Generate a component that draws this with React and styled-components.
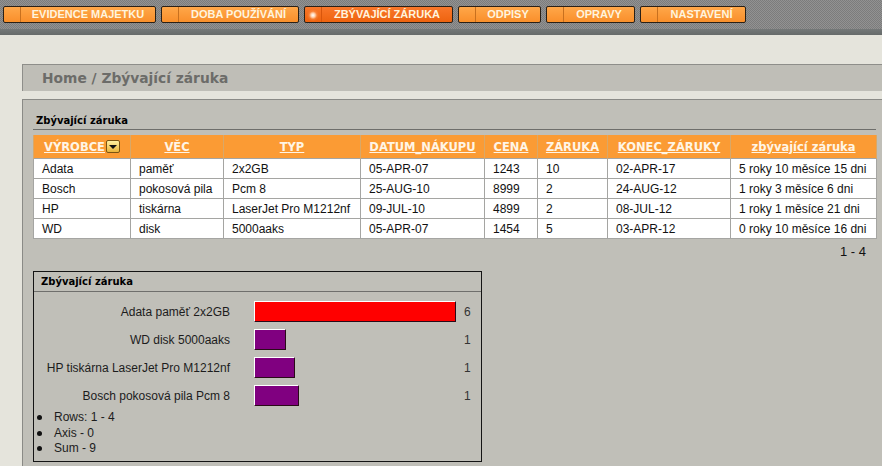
import React from 'react';
import styled, { createGlobalStyle, css } from 'styled-components';

const GlobalStyle = createGlobalStyle`
  html, body {
    margin: 0;
    padding: 0;
  }
  body {
    background: #e5e4dc;
    font-family: 'Liberation Sans', Arial, sans-serif;
    color: #111;
  }
`;

const NavBar = styled.nav`
  height: 35px;
  box-sizing: border-box;
  display: flex;
  align-items: flex-start;
  gap: 5px;
  padding: 6px 0 0 3px;
  background:
    linear-gradient(to bottom, transparent 29px, #747878 29px, #666a6a 35px),
    repeating-conic-gradient(#929292 0 25%, #7c7c7c 0 50%) 0 0 / 2px 2px;
`;

const NavButton = styled.a`
  display: flex;
  box-sizing: border-box;
  height: 17px;
  width: ${(p) => p.$w}px;
  border: 1px solid #2a2016;
  border-radius: 2px;
  background: linear-gradient(#ffa749, #f98f2b);
  color: #fff4de;
  font: bold 11px 'Liberation Sans', Arial, sans-serif;
  text-decoration: none;
  cursor: pointer;
  ${(p) =>
    p.$active &&
    css`
      background: linear-gradient(#f9772a, #ee630f);
    `}
`;

const NavCap = styled.span`
  width: 16px;
  flex: none;
  border-right: 1px solid #c8701e;
  ${(p) =>
    p.$active &&
    css`
      border-right-color: #d8560c;
      background: radial-gradient(circle at 50% 55%, #fff 0, #ffd2b0 2px, rgba(255, 150, 80, 0.4) 4px, transparent 6px);
    `}
`;

const NavLabel = styled.span`
  flex: 1;
  display: flex;
  align-items: center;
  justify-content: center;
  line-height: 15px;
`;

const Content = styled.main`
  padding: 29px 0 0 22px;
`;

const Breadcrumb = styled.div`
  height: 27px;
  box-sizing: border-box;
  display: flex;
  align-items: center;
  padding-left: 19px;
  background: #bfbeb7;
  border-top: 1px solid #8e8e8a;
  border-left: 1px solid #8e8e8a;
  color: #6c6c69;
  font: bold 13.8px 'DejaVu Sans', Verdana, sans-serif;
`;

const Panel = styled.section`
  margin-top: 8px;
  background: #c0bfb8;
  border-top: 1px solid #8a8a86;
  border-left: 1px solid #8a8a86;
  padding: 0 6px 4px 10px;
`;

const PanelTitle = styled.h2`
  margin: 0;
  height: 30px;
  box-sizing: border-box;
  display: flex;
  align-items: flex-end;
  padding: 0 0 3px 3px;
  border-bottom: 1px solid #6e6e6b;
  font: bold 10px 'DejaVu Sans', Verdana, sans-serif;
  color: #000;
`;

const Table = styled.table`
  margin-top: 5px;
  width: 843px;
  border-collapse: collapse;
  table-layout: fixed;
`;

const Th = styled.th`
  height: 23px;
  padding: 0;
  background: #fb9b34;
  border-left: 1px solid #d9a868;
  border-right: 1px solid #d9a868;
  color: #fff5e6;
  font: bold 11.5px 'DejaVu Sans', Verdana, sans-serif;
  text-align: center;
  vertical-align: middle;
`;

const HeadLink = styled.a`
  color: inherit;
  text-decoration: underline;
  cursor: pointer;
`;

const SortIcon = styled.span`
  display: inline-block;
  vertical-align: middle;
  margin-left: 1px;
  position: relative;
  top: -1px;
  width: 12px;
  height: 11px;
  border: 1px solid #7a5412;
  border-radius: 2px;
  background: linear-gradient(#fff0a0, #e9b43a);
  &::after {
    content: '';
    position: absolute;
    left: 2px;
    top: 4px;
    border-left: 4px solid transparent;
    border-right: 4px solid transparent;
    border-top: 4px solid #111;
  }
`;

const Td = styled.td`
  height: 20px;
  box-sizing: border-box;
  padding: 0 8px;
  background: #fff;
  border: 1px solid #a5a5a2;
  font-size: 12px;
  color: #111;
  white-space: nowrap;
  overflow: hidden;
`;

const Pager = styled.div`
  width: 843px;
  box-sizing: border-box;
  text-align: right;
  padding-right: 10px;
  line-height: 26px;
  font-size: 13px;
  color: #111;
`;

const ChartBox = styled.div`
  margin-top: 6px;
  width: 449px;
  box-sizing: border-box;
  border: 1px solid #141414;
  padding-bottom: 4px;
`;

const ChartHead = styled.div`
  height: 20px;
  box-sizing: border-box;
  display: flex;
  align-items: center;
  padding-left: 7px;
  border-bottom: 1px solid #6f6f6c;
  font: bold 10px 'DejaVu Sans', Verdana, sans-serif;
  color: #000;
`;

const Bars = styled.div`
  display: grid;
  grid-template-columns: 196px 204px auto;
  column-gap: 24px;
  row-gap: 7px;
  padding-top: 9px;
  align-items: center;
`;

const BarLabel = styled.div`
  text-align: right;
  font-size: 12px;
  color: #1c1c1c;
  white-space: nowrap;
`;

const BarTrack = styled.div`
  display: flex;
  height: 21px;
  margin-left: -24px;
  padding-left: 24px;
`;

const Bar = styled.div`
  height: 21px;
  box-sizing: border-box;
  background: ${(p) => p.$color};
  border-top: 1px solid #fff;
  border-left: 1px solid #fff;
  border-right: 1px solid #2a0a18;
  border-bottom: 1px solid #2a0a18;
`;

const BarValue = styled.div`
  margin-left: -18px;
  font-size: 12px;
  color: #333;
`;

const Notes = styled.ul`
  list-style: none;
  margin: 4px 0 0;
  padding: 0 0 0 3px;
`;

const Note = styled.li`
  display: flex;
  align-items: center;
  gap: 12px;
  line-height: 15.5px;
  font-size: 12px;
  color: #1c1c1c;
`;

const Dot = styled.span`
  width: 5px;
  height: 5px;
  border-radius: 50%;
  background: #111;
`;

const navItems = [
  { label: 'EVIDENCE MAJETKU', w: 153 },
  { label: 'DOBA POUŽÍVÁNÍ', w: 138 },
  { label: 'ZBÝVAJÍCÍ ZÁRUKA', w: 149, active: true },
  { label: 'ODPISY', w: 83 },
  { label: 'OPRAVY', w: 89 },
  { label: 'NASTAVENÍ', w: 106 },
];

const columns = [
  { label: 'VÝROBCE', w: 97, sort: true },
  { label: 'VĚC', w: 93 },
  { label: 'TYP', w: 137 },
  { label: 'DATUM_NÁKUPU', w: 124 },
  { label: 'CENA', w: 53 },
  { label: 'ZÁRUKA', w: 70 },
  { label: 'KONEC_ZÁRUKY', w: 123 },
  { label: 'zbývající záruka', w: 146 },
];

const rows = [
  ['Adata', 'paměť', '2x2GB', '05-APR-07', '1243', '10', '02-APR-17', '5 roky 10 měsíce 15 dni'],
  ['Bosch', 'pokosová pila', 'Pcm 8', '25-AUG-10', '8999', '2', '24-AUG-12', '1 roky 3 měsíce 6 dni'],
  ['HP', 'tiskárna', 'LaserJet Pro M1212nf', '09-JUL-10', '4899', '2', '08-JUL-12', '1 roky 1 měsíce 21 dni'],
  ['WD', 'disk', '5000aaks', '05-APR-07', '1454', '5', '03-APR-12', '0 roky 10 měsíce 16 dni'],
];

const chart = [
  { label: 'Adata paměť 2x2GB', value: 6, width: 202, color: '#ff0000' },
  { label: 'WD disk 5000aaks', value: 1, width: 32, color: '#800080' },
  { label: 'HP tiskárna LaserJet Pro M1212nf', value: 1, width: 41, color: '#800080' },
  { label: 'Bosch pokosová pila Pcm 8', value: 1, width: 45, color: '#800080' },
];

export default function App() {
  return (
    <>
      <GlobalStyle />
      <NavBar>
        {navItems.map((n) => (
          <NavButton key={n.label} $w={n.w} $active={n.active}>
            <NavCap $active={n.active} />
            <NavLabel>{n.label}</NavLabel>
          </NavButton>
        ))}
      </NavBar>
      <Content>
        <Breadcrumb>Home / Zbývající záruka</Breadcrumb>
        <Panel>
          <PanelTitle>Zbývající záruka</PanelTitle>
          <Table>
            <colgroup>
              {columns.map((c) => (
                <col key={c.label} style={{ width: c.w }} />
              ))}
            </colgroup>
            <thead>
              <tr>
                {columns.map((c) => (
                  <Th key={c.label}>
                    <HeadLink>{c.label}</HeadLink>
                    {c.sort && <SortIcon />}
                  </Th>
                ))}
              </tr>
            </thead>
            <tbody>
              {rows.map((r) => (
                <tr key={r[0]}>
                  {r.map((v, i) => (
                    <Td key={i}>{v}</Td>
                  ))}
                </tr>
              ))}
            </tbody>
          </Table>
          <Pager>1 - 4</Pager>
          <ChartBox>
            <ChartHead>Zbývající záruka</ChartHead>
            <Bars>
              {chart.map((c) => (
                <React.Fragment key={c.label}>
                  <BarLabel>{c.label}</BarLabel>
                  <BarTrack>
                    <Bar $color={c.color} style={{ width: c.width }} />
                  </BarTrack>
                  <BarValue>{c.value}</BarValue>
                </React.Fragment>
              ))}
            </Bars>
            <Notes>
              <Note><Dot />Rows: 1 - 4</Note>
              <Note><Dot />Axis - 0</Note>
              <Note><Dot />Sum - 9</Note>
            </Notes>
          </ChartBox>
        </Panel>
      </Content>
    </>
  );
}
